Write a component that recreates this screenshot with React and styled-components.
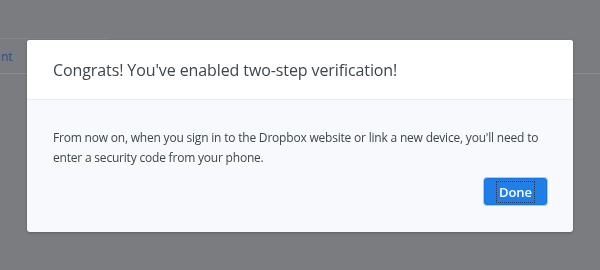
import React from "react";
import styled, { createGlobalStyle } from "styled-components";

const GlobalStyle = createGlobalStyle`
  html, body {
    margin: 0;
    padding: 0;
    background: #7b7c80;
    font-family: "Open Sans", "Liberation Sans", sans-serif;
  }
`;

const Page = styled.div`
  width: 600px;
  height: 270px;
  overflow: hidden;
  padding-top: 38px;
  box-sizing: border-box;
`;

const TabBar = styled.div`
  display: flex;
  height: 35px;
  border-bottom: 1px solid #8c8d92;
`;

const Tab = styled.div`
  display: flex;
  align-items: center;
  width: 107px;
  padding-left: 1px;
  box-sizing: border-box;
  border-top: 1px dotted #8e8f94;
  font-size: 12px;
  color: #2a4f80;
`;

const Modal = styled.div`
  position: fixed;
  top: 40px;
  left: 27px;
  width: 546px;
  height: 192px;
  display: flex;
  flex-direction: column;
  border-radius: 3px;
  overflow: hidden;
  background: #f7f9fc;
  box-shadow: 0 1px 3px rgba(0, 0, 0, 0.25);
`;

const Header = styled.div`
  display: flex;
  align-items: center;
  height: 59px;
  padding: 0 26px;
  background: #ffffff;
  border-bottom: 1px solid #e8eaed;
`;

const Title = styled.h2`
  margin: 0;
  font-size: 16px;
  font-weight: 400;
  letter-spacing: -0.1px;
  color: #3d464d;
`;

const Body = styled.div`
  display: flex;
  flex-direction: column;
  padding: 28px 26px 26px;
`;

const Message = styled.p`
  margin: 0;
  font-size: 12px;
  letter-spacing: -0.2px;
  line-height: 20px;
  color: #3d464d;
`;

const Actions = styled.div`
  display: flex;
  justify-content: flex-end;
  margin-top: 10px;
`;

const Button = styled.button`
  width: 63px;
  height: 27px;
  padding: 0;
  border: 1px solid #1b74d9;
  border-radius: 3px;
  background: #1f7ee8;
  box-shadow: 0 0 0 1px #a9cdf5;
  font-family: inherit;
  font-size: 13px;
  font-weight: 600;
  color: #ffffff;
  cursor: pointer;
`;

const FocusText = styled.span`
  padding: 1px 2px;
  outline: 1px dotted #223a5a;
`;

export default function App() {
  return (
    <>
      <GlobalStyle />
      <Page>
        <TabBar>
          <Tab>nt</Tab>
        </TabBar>
      </Page>
      <Modal>
        <Header>
          <Title>Congrats! You've enabled two-step verification!</Title>
        </Header>
        <Body>
          <Message>
            From now on, when you sign in to the Dropbox website or link a new
            device, you'll need to enter a security code from your phone.
          </Message>
          <Actions>
            <Button>
              <FocusText>Done</FocusText>
            </Button>
          </Actions>
        </Body>
      </Modal>
    </>
  );
}
